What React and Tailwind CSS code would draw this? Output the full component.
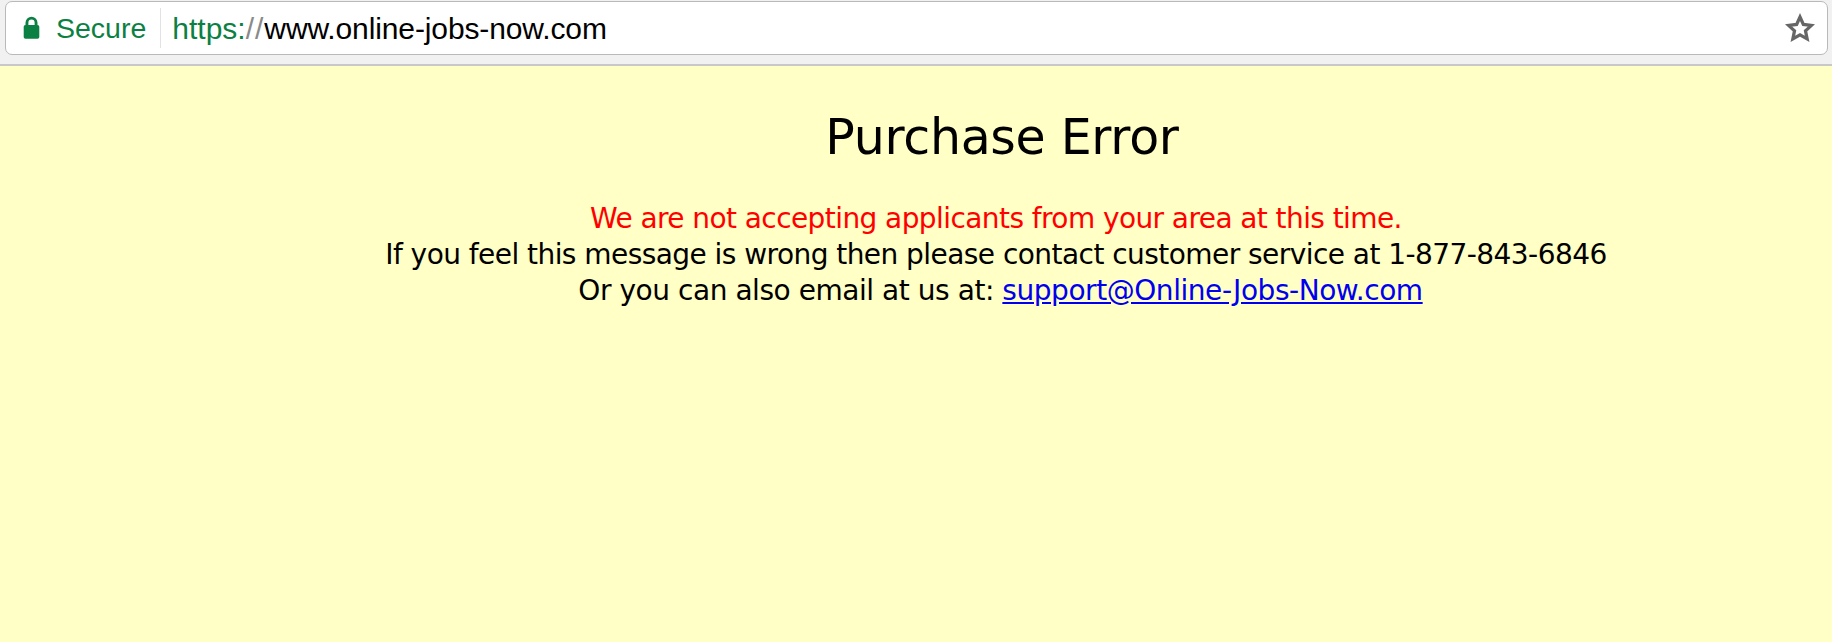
export default function App() {
  return (
    <div className="flex h-[642px] w-[1832px] flex-col overflow-hidden bg-[#ffffc6] font-['Liberation_Sans',sans-serif]">
      <div className="h-[66px] shrink-0 border-b-2 border-[#c8c8c8] bg-[#f1f1f1] pt-px pr-[4px] pl-[5px]">
        <div className="flex h-[54px] items-center rounded-[7px] border border-[#b9b9b9] bg-white">
          <svg className="ml-[17px] h-[24px] w-[17px]" viewBox="0 0 14 20">
            <path d="M3.2 8V5.6a3.8 3.8 0 0 1 7.6 0V8" fill="none" stroke="#0b8043" strokeWidth="2.4" />
            <rect x="0.5" y="7.5" width="13" height="11.5" rx="1.5" fill="#0b8043" />
          </svg>
          <span className="ml-[16px] text-[28.5px] text-[#0b8043]">Secure</span>
          <div className="ml-[14px] h-[40px] w-px bg-[#e2e2e2]" />
          <div className="ml-[11px] text-[30px]">
            <span className="text-[#0b8043]">https:</span>
            <span className="tracking-[1px] text-[#8a8a8a]">//</span>
            <span className="tracking-[-0.12px] text-black">www.online-jobs-now.com</span>
          </div>
          <svg className="mr-[12px] ml-auto h-[30px] w-[30px]" viewBox="0 0 24 24">
            <path d="M12 3.2l2.7 5.9 6.5.8-4.8 4.4 1.3 6.4-5.7-3.2-5.7 3.2 1.3-6.4-4.8-4.4 6.5-.8z" fill="none" stroke="#666" strokeWidth="2.6" strokeLinejoin="miter" />
          </svg>
        </div>
      </div>
      <div className="flex flex-col items-center font-['DejaVu_Sans',sans-serif]">
        <h1 className="mt-[44px] ml-[172px] text-[49px] leading-[56px] font-normal tracking-[-0.3px] text-black">Purchase Error</h1>
        <div className="mt-[35px] ml-[160px] text-center text-[28px] leading-[36px] tracking-[-0.55px] text-black">
          <div className="tracking-[-0.58px] text-[#ff0000]">We are not accepting applicants from your area at this time.</div>
          <div>If you feel this message is wrong then please contact customer service at 1-877-843-6846</div>
          <div className="pl-[9px] tracking-[-0.45px]">Or you can also email at us at: <a className="text-[#0000ee] underline" href="#">support@Online-Jobs-Now.com</a></div>
        </div>
      </div>
    </div>
  );
}
